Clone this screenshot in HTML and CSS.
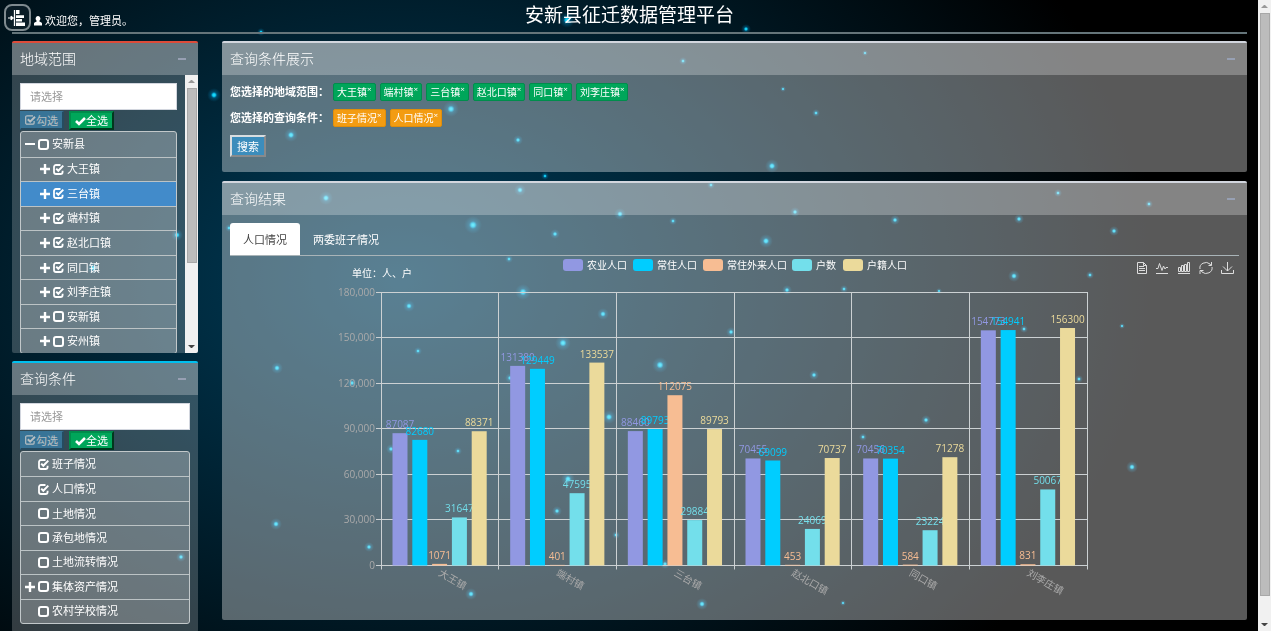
FILE: index.html
```html
<!DOCTYPE html>
<html lang="zh-CN">
<head>
<meta charset="utf-8">
<title>安新县征迁数据管理平台</title>
<link rel="stylesheet" href="styles.css">
</head>
<body>
<svg class="defs" aria-hidden="true">
  <symbol id="i-plus" viewBox="0 0 10 10"><path d="M3.8 0h2.4v3.8H10v2.4H6.2V10H3.8V6.2H0V3.8h3.8z"/></symbol>
  <symbol id="i-minus" viewBox="0 0 10 10"><path d="M0 3.9h10v2.2H0z"/></symbol>
  <symbol id="i-off" viewBox="0 0 11 11"><rect x="1" y="1" width="9" height="9" rx="2" fill="none" stroke="currentColor" stroke-width="2"/></symbol>
  <symbol id="i-on" viewBox="0 0 11 11"><path d="M7.500 1H3a2 2 0 0 0-2 2v5a2 2 0 0 0 2 2h4.600a2 2 0 0 0 2-2V6.800" fill="none" stroke="currentColor" stroke-width="1.800"/><path d="M3.200 4.600l2.100 2.200 5-5.200" fill="none" stroke="currentColor" stroke-width="2"/></symbol>
  <symbol id="i-square" viewBox="0 0 11 10"><path d="M8 .8H2a1.300 1.300 0 0 0-1.300 1.300v5.800A1.300 1.300 0 0 0 2 9.200h5.800a1.300 1.300 0 0 0 1.300-1.300V6" fill="none" stroke="currentColor" stroke-width="1.200"/><path d="M2.800 4.200l2.400 2.400 4.800-4.800" fill="none" stroke="currentColor" stroke-width="2"/></symbol>
  <symbol id="i-check" viewBox="0 0 11 10"><path d="M1 5l3 3 6-6" fill="none" stroke="currentColor" stroke-width="2.600"/></symbol>
</svg>
<svg class="sky" id="sky" viewBox="0 0 1271 631" preserveAspectRatio="xMidYMid slice" aria-hidden="true">
  <defs><radialGradient id="glow"><stop offset="0" stop-color="#30efff"/><stop offset=".22" stop-color="#08c8f4" stop-opacity=".95"/><stop offset=".45" stop-color="#0094cc" stop-opacity=".35"/><stop offset="1" stop-color="#0080b0" stop-opacity="0"/></radialGradient></defs>
</svg>
<div class="page">
  <header class="top">
    <div class="user">
      <button class="toggle" type="button" aria-label="菜单"><svg viewBox="2 2 23 23"><path d="M4 14h4M7 12l2.500 2-2.500 2z" fill="#fff" stroke="#fff"/><path d="M10.500 6v16" stroke="#fff" stroke-width="1.300"/><path d="M12 6h3.500v4H12zM12 11.200h8v2.800h-8zM12 15h6v2.400h-6zM12 18.600h9V22h-9z" fill="#fff"/></svg></button>
      <svg class="person" viewBox="0 0 8 10"><path d="M4 0a2.300 2.600 0 0 1 1.400 4.700v.8L7.400 6.400Q8 6.800 8 7.600V9.500H0V7.600Q0 6.800.6 6.400L2.600 5.500v-.8A2.300 2.600 0 0 1 4 0z" fill="#fff"/></svg>
      <span>欢迎您，管理员。</span>
    </div>
    <h1>安新县征迁数据管理平台</h1>
  </header>
  <div class="columns">
    <aside>
      <section class="box red">
        <div class="head"><h2>地域范围</h2><button class="fold" type="button" aria-label="折叠"></button></div>
        <div class="scroller">
          <div class="body">
            <input class="search" type="text" placeholder="请选择" aria-label="地域范围">
            <div class="acts"><button class="blue" type="button" disabled><svg><use href="#i-square"/></svg>勾选</button><button class="green" type="button"><svg><use href="#i-check"/></svg>全选</button></div>
            <ul class="tree nine">
              <li><svg class="ex"><use href="#i-minus"/></svg><svg><use href="#i-off"/></svg>安新县</li>
              <li class="sub"><svg class="ex"><use href="#i-plus"/></svg><svg><use href="#i-on"/></svg>大王镇</li>
              <li class="sub sel"><svg class="ex"><use href="#i-plus"/></svg><svg><use href="#i-on"/></svg>三台镇</li>
              <li class="sub"><svg class="ex"><use href="#i-plus"/></svg><svg><use href="#i-on"/></svg>端村镇</li>
              <li class="sub"><svg class="ex"><use href="#i-plus"/></svg><svg><use href="#i-on"/></svg>赵北口镇</li>
              <li class="sub"><svg class="ex"><use href="#i-plus"/></svg><svg><use href="#i-on"/></svg>同口镇</li>
              <li class="sub"><svg class="ex"><use href="#i-plus"/></svg><svg><use href="#i-on"/></svg>刘李庄镇</li>
              <li class="sub"><svg class="ex"><use href="#i-plus"/></svg><svg><use href="#i-off"/></svg>安新镇</li>
              <li class="sub"><svg class="ex"><use href="#i-plus"/></svg><svg><use href="#i-off"/></svg>安州镇</li>
            </ul>
          </div>
          <div class="bar"><i class="up"></i><b class="thumb"></b><i class="down"></i></div>
        </div>
      </section>
      <section class="box cyan">
        <div class="head"><h2>查询条件</h2><button class="fold" type="button" aria-label="折叠"></button></div>
        <div class="body">
          <input class="search" type="text" placeholder="请选择" aria-label="查询条件">
          <div class="acts"><button class="blue" type="button" disabled><svg><use href="#i-square"/></svg>勾选</button><button class="green" type="button"><svg><use href="#i-check"/></svg>全选</button></div>
          <ul class="tree seven">
            <li><svg class="ex"></svg><svg><use href="#i-on"/></svg>班子情况</li>
            <li><svg class="ex"></svg><svg><use href="#i-on"/></svg>人口情况</li>
            <li><svg class="ex"></svg><svg><use href="#i-off"/></svg>土地情况</li>
            <li><svg class="ex"></svg><svg><use href="#i-off"/></svg>承包地情况</li>
            <li><svg class="ex"></svg><svg><use href="#i-off"/></svg>土地流转情况</li>
            <li><svg class="ex"><use href="#i-plus"/></svg><svg><use href="#i-off"/></svg>集体资产情况</li>
            <li><svg class="ex"></svg><svg><use href="#i-off"/></svg>农村学校情况</li>
          </ul>
        </div>
      </section>
    </aside>
    <main>
      <section class="box wide">
        <div class="head"><h2>查询条件展示</h2><button class="fold" type="button" aria-label="折叠"></button></div>
        <div class="body query">
          <div class="row"><strong>您选择的地域范围：</strong><span class="chip">大王镇<sup>×</sup></span><span class="chip">端村镇<sup>×</sup></span><span class="chip">三台镇<sup>×</sup></span><span class="chip">赵北口镇<sup>×</sup></span><span class="chip">同口镇<sup>×</sup></span><span class="chip">刘李庄镇<sup>×</sup></span></div>
          <div class="row"><strong>您选择的查询条件：</strong><span class="chip orange">班子情况<sup>×</sup></span><span class="chip orange">人口情况<sup>×</sup></span></div>
          <button class="go" type="button">搜索</button>
        </div>
      </section>
      <section class="box wide">
        <div class="head"><h2>查询结果</h2><button class="fold" type="button" aria-label="折叠"></button></div>
        <div class="body">
          <nav class="tabs"><a class="on" href="#chart">人口情况</a><a href="#chart">两委班子情况</a></nav>
          <svg class="chart" id="chart" viewBox="230 256 1009 356" role="img" aria-label="人口情况">
            <g fill="none" stroke="#ddd" stroke-width="1">
              <path d="M1137.500 262.500h6l3 3v8h-9zM1143.500 262.500v3h3M1139 266.500h5M1139 268.500h6M1139 270.500h6"/>
              <path d="M1156 268.500h2l1.500-5 2.500 7 1.500-4.500 1.500 3 1-1.500h2M1156 273.500h12"/>
              <path d="M1178.500 267.500h2v4h-2zM1181.500 265.500h2v6h-2zM1184.500 264.500h2v7h-2zM1187.500 262.500h2v9h-2zM1178 273.500h12"/>
              <path d="M1200 269a6 5.500 0 0 1 10-5l1 1.500M1211.500 262v3.500h-3M1212 267a6 5.500 0 0 1-10 5l-1-1.500M1200 274v-3.500h3.500"/>
              <path d="M1227.500 262v9M1223 266.500l4.500 4.500 4.500-4.500M1221.500 270v3.500h12V270"/>
            </g>
          </svg>
        </div>
      </section>
    </main>
  </div>
</div>
<div class="bar pagebar"><i class="up"></i><b class="thumb"></b><i class="down"></i></div>
<script src="script.js"></script>
</body>
</html>
```
FILE: styles.css
```css
* { box-sizing: border-box; }
body {
  margin: 0;
  height: 100vh;
  overflow: hidden;
  display: flex;
  font: 11px/16px "Open Sans", "Noto Sans CJK SC", sans-serif;
  color: #fff;
  background: #000 radial-gradient(760px 560px at 400px 280px, #003d5a, #000);
}
button, input { font: inherit; color: inherit; }
.defs { position: absolute; width: 0; height: 0; }
.sky { position: fixed; inset: 0; width: 100%; height: 100%; z-index: -1; }
.page { flex: 1; min-width: 0; padding: 0 11px 0 12px; }

.top {
  height: 34px;
  margin-bottom: 7px;
  border-bottom: 2px solid #65757a;
  display: grid;
  grid-template-columns: 1fr auto 1fr;
}
.user { display: flex; gap: 3px; align-items: flex-end; margin-left: -8px; }
.user span { line-height: 22px; }
.toggle {
  width: 27px; height: 27px; padding: 0; margin-bottom: 1px;
  border: 2px solid #7f8a8f; border-radius: 8px; background: #0a1c26;
  display: flex;
}
.toggle svg { width: 100%; height: 100%; }
.person { width: 8px; height: 10px; margin-bottom: 6px; }
h1 { margin: 0; font-size: 19px; line-height: 30px; font-weight: 400; }

.columns { display: flex; gap: 24px; align-items: flex-start; }
aside { width: 186px; flex: none; display: grid; gap: 8px; }
main { flex: 1; min-width: 0; display: grid; gap: 9px; }
.box { border-radius: 2px; background: rgba(255,255,255,.2); border-top: 2px solid #d2d6de; overflow: hidden; }
.wide { background: rgba(255,255,255,.35); background-clip: padding-box; }
.red { border-color: #dd4b39; }
.cyan { border-color: #00c0ef; }
.head {
  height: 32px; padding: 0 12px 0 8px;
  display: flex; align-items: center; justify-content: space-between;
  background: rgba(255,255,255,.26);
}
h2 { margin: 0; font-size: 14px; line-height: 20px; font-weight: 300; }
.fold { width: 8px; height: 2px; padding: 0; border: 0; background: #97a0b3; }
.body { padding: 8px; }
.scroller { display: flex; height: 278px; overflow: hidden; }
.scroller .body { flex: 1; }
.search {
  display: block; width: 100%; height: 27px; padding: 0 9px;
  border: 1px solid #d2d6de; border-radius: 0; background: #fff; color: #555;
}
.search::placeholder { color: #999; }
.acts { display: flex; gap: 5px; padding: 1px 0; }
.acts button, .go {
  height: 19px; padding: 0 4px; border: 2px outset #3c8dbc; border-radius: 0;
  background: #3c8dbc; line-height: 15px;
  display: flex; align-items: center;
}
.acts button:disabled { opacity: .65; color: #fff; border-width: 1px 2px 2px 1px; }
.acts .green { background: #00a65a; border: 2px outset #008d4c; }
.acts svg { width: 11px; height: 10px; }
.tree {
  margin: 0; padding: 0; list-style: none;
  display: grid; grid-auto-rows: 1fr;
  border: 1px solid #c2c8ca; border-radius: 3px;
  background: rgba(255,255,255,.27);
}
.nine { height: 223px; }
.seven { height: 173px; }
.tree li { display: flex; align-items: center; padding-left: 4px; }
.tree li + li { border-top: 1px solid #bcc3c5; }
.tree .sub { padding-left: 19px; }
.tree .sel { background: #428bca; }
.tree svg { width: 11px; height: 11px; margin-right: 3px; fill: #fff; }
.tree .ex { width: 10px; height: 10px; }

.bar { width: 13px; background: #f1f1f1; display: flex; flex-direction: column; align-items: center; }
.bar .thumb { width: 10px; height: 175px; background: #bcbcbc; border: 1px solid #a8a8a8; }
.bar i { height: 13px; width: 7px; }
.bar .up::before, .bar .down::before { content: ""; display: block; margin-top: 5px; border: 3px solid transparent; }
.bar .up::before { border-top: 0; border-bottom-color: #999; }
.bar .down::before { border-bottom: 0; border-top-color: #444; }
.bar .down { margin-top: auto; }
.pagebar { height: 100vh; }
.pagebar .thumb { flex: 0 1 583px; }

.query { height: 97px; }
.row { display: flex; gap: 4px; align-items: center; height: 18px; margin-bottom: 8px; }
.chip {
  height: 18px; padding: 0 3px; border: 1px solid #008d4c; border-radius: 2px;
  background: #00a65a; font-size: 10px; line-height: 16px; display: flex;
}
.chip sup { font-size: 8px; line-height: 9px; }
.orange { background: #f39c12; border-color: #e08e0b; }
.go { height: 22px; padding: 0 5px; border: 2px outset #d8dde0; }
.tabs { display: flex; height: 33px; border-bottom: 1px solid #a9b4b8; }
.tabs a { padding: 0 13px; line-height: 34px; color: #fff; text-decoration: none; border-radius: 3px 3px 0 0; }
.tabs .on { background: #fff; color: #444; }
.chart { display: block; width: 100%; height: auto; font-size: 10px; }
```
FILE: script.js
```js
const NS = 'http://www.w3.org/2000/svg';
function add(parent, tag, attrs, text) {
  const el = document.createElementNS(NS, tag);
  for (const k in attrs) el.setAttribute(k, attrs[k]);
  if (text !== undefined) el.textContent = text;
  parent.appendChild(el);
}

const stars = [[261,32,4],[214,95,7],[291,135,7],[451,109,8],[518,140,5],[772,166,7],[545,176,4],[567,20,8],[746,29,5],[683,61,4],[816,113,4],[865,53,3],[783,89,3],[326,198,7],[520,190,6],[620,214,6],[473,225,9],[555,234,5],[509,259,4],[766,241,7],[795,212,5],[711,185,4],[673,221,4],[895,220,5],[1019,219,5],[1058,193,4],[1149,204,4],[1114,231,5],[1014,276,6],[1090,275,4],[939,291,3],[1024,329,4],[1122,326,3],[409,306,6],[523,292,8],[603,314,6],[563,343,8],[418,351,4],[660,365,8],[352,383,5],[391,449,5],[458,451,4],[609,417,7],[568,479,7],[557,511,5],[616,535,4],[369,547,5],[471,594,6],[665,564,5],[277,368,6],[276,524,6],[787,290,5],[844,289,4],[731,332,5],[814,375,5],[926,420,5],[863,437,4],[1079,379,4],[1132,467,6],[702,604,6],[181,557,5],[177,235,6],[93,268,6],[229,228,4],[510,378,5],[843,603,3]];
const sky = document.getElementById('sky');
for (const [cx, cy, r] of stars) add(sky, 'circle', { cx, cy, r, fill: 'url(#glow)' });

const chart = document.getElementById('chart');
const left = 381, right = 1087, top0 = 292, base = 565.5, max = 180000;
const towns = ['大王镇', '端村镇', '三台镇', '赵北口镇', '同口镇', '刘李庄镇'];
const series = [
  { name: '农业人口', color: '#9198e2', x: 563, data: [87087, 131380, 88460, 70455, 70456, 154773] },
  { name: '常住人口', color: '#00cdff', x: 633, data: [82680, 129449, 89793, 69099, 70354, 154941] },
  { name: '常住外来人口', color: '#f7bd93', x: 703, data: [1071, 401, 112075, 453, 584, 831] },
  { name: '户数', color: '#73dfeb', x: 792, data: [31647, 47595, 29884, 24069, 23224, 50067] },
  { name: '户籍人口', color: '#ebda9b', x: 843, data: [88371, 133537, 89793, 70737, 71278, 156300] }
];
const step = (right - left) / towns.length;

add(chart, 'text', { x: 352, y: 277, fill: '#fff' }, '单位：人、户');
for (const s of series) {
  add(chart, 'rect', { x: s.x, y: 259, width: 20, height: 12, rx: 3, fill: s.color });
  add(chart, 'text', { x: s.x + 24, y: 269, fill: '#fff' }, s.name);
}
for (let v = 0; v <= max; v += 30000) {
  const y = Math.floor(base - v / max * (base - top0)) + .5;
  add(chart, 'path', { d: `M${left - 5} ${y}H${right}`, stroke: '#ccd1d3' });
  add(chart, 'text', { x: left - 6, y: y + 3, fill: '#aaa', 'text-anchor': 'end' }, v.toLocaleString('en-US'));
}
for (let i = 0; i <= towns.length; i++) {
  const x = Math.floor(left + i * step) + .5;
  add(chart, 'path', { d: `M${x} ${top0}V${base + 4}`, stroke: '#ccd1d3' });
}
series.forEach((s, k) => {
  s.data.forEach((v, i) => {
    const h = v / max * (base - top0);
    const x = left + i * step + 11.5 + k * 19.8;
    add(chart, 'rect', { x, y: base - h, width: 15, height: h, fill: s.color });
    add(chart, 'text', { x: x + 7.5, y: base - h - 5, fill: s.color, 'text-anchor': 'middle' }, v);
  });
});
towns.forEach((t, i) => {
  const x = left + (i + .5) * step - 2;
  add(chart, 'text', { transform: `translate(${x} 575) rotate(30)`, fill: '#aaa' }, t);
});
```
